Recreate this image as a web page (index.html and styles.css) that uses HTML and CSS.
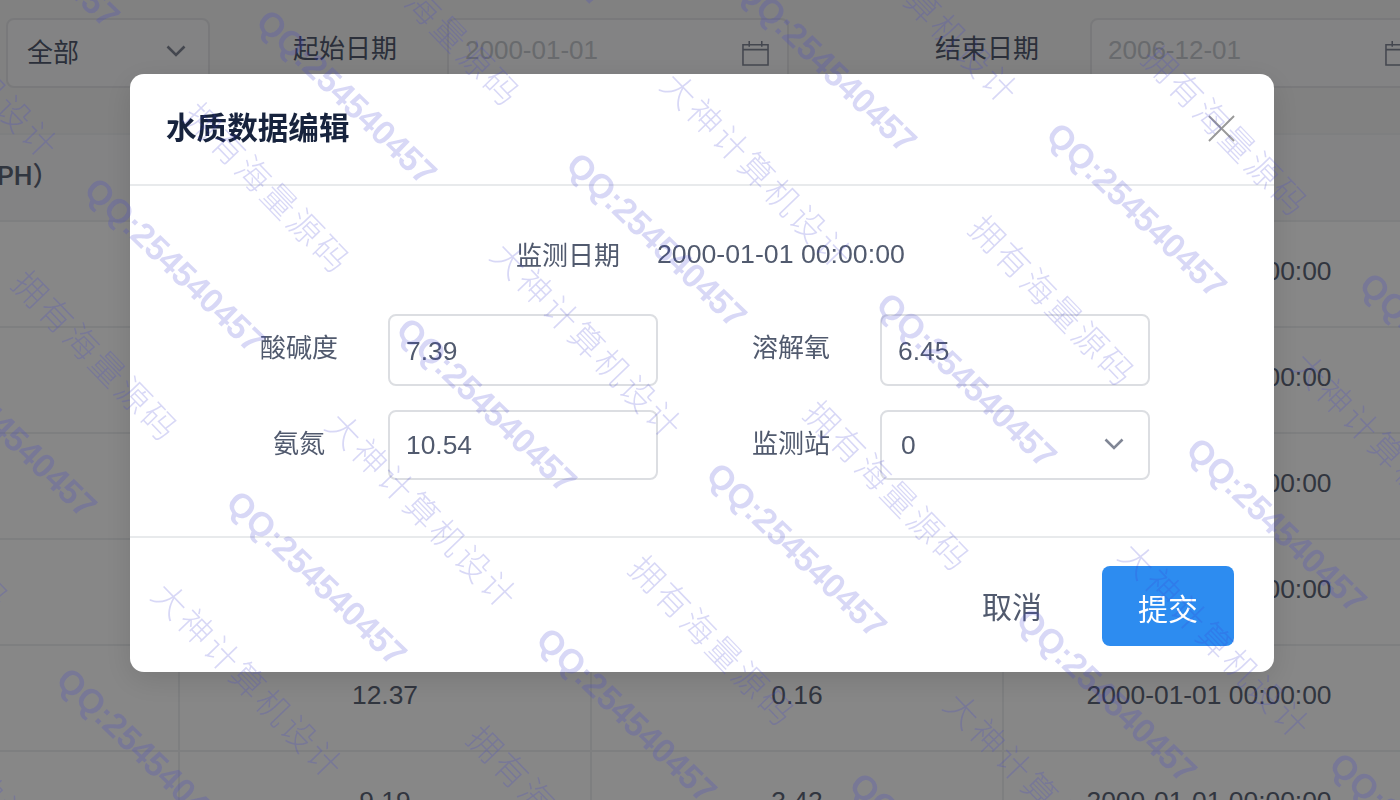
FILE: index.html
```html
<!DOCTYPE html>
<html lang="zh">
<head>
<meta charset="utf-8">
<title>水质数据编辑</title>
<link rel="stylesheet" href="styles.css">
</head>
<body>
<div class="page">
  <div class="filters">
    <div class="box select-box"><span>全部</span>
      <svg class="chev" viewBox="0 0 20 12"><path d="M1.500 1.500 10 10l8.500-8.500"/></svg>
    </div>
    <div class="flabel first">起始日期</div>
    <div class="box date-box"><span>2000-01-01</span>
      <svg class="cal" viewBox="0 0 28 28"><path d="M1 5h26v21H1zM1 10h26M7.500 1v6M20.500 1v6"/></svg>
    </div>
    <div class="flabel second">结束日期</div>
    <div class="box date-box"><span>2006-12-01</span>
      <svg class="cal" viewBox="0 0 28 28"><path d="M1 5h26v21H1zM1 10h26M7.500 1v6M20.500 1v6"/></svg>
    </div>
  </div>
  <div class="table">
    <div class="row head"><div class="cell ph">PH）</div><div class="cell">氨氮</div><div class="cell">溶解氧</div><div class="cell">监测时间</div></div>
    <div class="row"><div class="cell"></div><div class="cell">10.54</div><div class="cell">6.45</div><div class="cell">2000-01-01 00:00:00</div></div>
    <div class="row"><div class="cell"></div><div class="cell">9.33</div><div class="cell">1.28</div><div class="cell">2000-01-01 00:00:00</div></div>
    <div class="row"><div class="cell"></div><div class="cell">7.41</div><div class="cell">0.52</div><div class="cell">2000-01-01 00:00:00</div></div>
    <div class="row"><div class="cell"></div><div class="cell">11.06</div><div class="cell">2.87</div><div class="cell">2000-01-01 00:00:00</div></div>
    <div class="row"><div class="cell"></div><div class="cell">12.37</div><div class="cell">0.16</div><div class="cell">2000-01-01 00:00:00</div></div>
    <div class="row"><div class="cell"></div><div class="cell">9.19</div><div class="cell">3.42</div><div class="cell">2000-01-01 00:00:00</div></div>
  </div>
</div>

<div class="mask"></div>

<div class="modal-wrap">
  <div class="modal">
    <div class="modal-head">
      <div class="modal-title">水质数据编辑</div>
      <svg class="close" viewBox="0 0 28 28"><path d="M1 1l26 26M27 1 1 27"/></svg>
    </div>
    <div class="modal-body">
      <div class="date-line"><span class="date-label">监测日期</span><span class="date-val">2000-01-01 00:00:00</span></div>
      <div class="form">
        <div class="field"><label class="lab">酸碱度</label><div class="inp tall">7.39</div></div>
        <div class="field"><label class="lab">溶解氧</label><div class="inp tall">6.45</div></div>
        <div class="field"><label class="lab narrow">氨氮</label><div class="inp">10.54</div></div>
        <div class="field"><label class="lab">监测站</label><div class="inp sel"><span>0</span>
          <svg class="chev small" viewBox="0 0 20 12"><path d="M1.500 1.500 10 10l8.500-8.500"/></svg></div></div>
      </div>
    </div>
    <div class="modal-foot">
      <span class="cancel">取消</span>
      <span class="submit">提交</span>
    </div>
  </div>
</div>

<svg class="wm" width="1400" height="800" viewBox="0 0 1400 800">
  <g class="qq">
    <text transform="translate(347 97) rotate(44)">QQ:254540457</text>
    <text transform="translate(657 240) rotate(44)">QQ:254540457</text>
    <text transform="translate(175 265) rotate(44)">QQ:254540457</text>
    <text transform="translate(487 405) rotate(44)">QQ:254540457</text>
    <text transform="translate(967 380) rotate(44)">QQ:254540457</text>
    <text transform="translate(1137 210) rotate(44)">QQ:254540457</text>
    <text transform="translate(827 65) rotate(44)">QQ:254540457</text>
    <text transform="translate(317 578) rotate(44)">QQ:254540457</text>
    <text transform="translate(797 550) rotate(44)">QQ:254540457</text>
    <text transform="translate(1277 525) rotate(44)">QQ:254540457</text>
    <text transform="translate(627 715) rotate(44)">QQ:254540457</text>
    <text transform="translate(147 755) rotate(44)">QQ:254540457</text>
    <text transform="translate(1107 695) rotate(44)">QQ:254540457</text>
    <text transform="translate(7 430) rotate(44)">QQ:254540457</text>
    <text transform="translate(30 -60) rotate(44)">QQ:254540457</text>
    <text transform="translate(520 -80) rotate(44)">QQ:254540457</text>
    <text transform="translate(1450 360) rotate(44)">QQ:254540457</text>
    <text transform="translate(940 860) rotate(44)">QQ:254540457</text>
    <text transform="translate(1420 840) rotate(44)">QQ:254540457</text>
  </g>
  <g class="cn">
    <text transform="translate(269 187) rotate(46)">拥有海量源码</text>
    <text transform="translate(97 355) rotate(46)">拥有海量源码</text>
    <text transform="translate(439 20) rotate(46)">拥有海量源码</text>
    <text transform="translate(1227 130) rotate(46)">拥有海量源码</text>
    <text transform="translate(1054 300) rotate(46)">拥有海量源码</text>
    <text transform="translate(889 485) rotate(46)">拥有海量源码</text>
    <text transform="translate(714 640) rotate(46)">拥有海量源码</text>
    <text transform="translate(552 810) rotate(46)">拥有海量源码</text>
    <text transform="translate(-72 525) rotate(46)">拥有海量源码</text>
    <text transform="translate(759 170) rotate(46)">大神计算机设计</text>
    <text transform="translate(589 340) rotate(46)">大神计算机设计</text>
    <text transform="translate(424 510) rotate(46)">大神计算机设计</text>
    <text transform="translate(250 680) rotate(46)">大神计算机设计</text>
    <text transform="translate(1217 640) rotate(46)">大神计算机设计</text>
    <text transform="translate(1042 790) rotate(46)">大神计算机设计</text>
    <text transform="translate(1389 450) rotate(46)">大神计算机设计</text>
    <text transform="translate(925 5) rotate(46)">大神计算机设计</text>
    <text transform="translate(-35 60) rotate(46)">大神计算机设计</text>
    <text transform="translate(40 840) rotate(46)">大神计算机设计</text>
  </g>
</svg>
</body>
</html>
```
FILE: styles.css
```css
* { box-sizing: border-box; }
html, body { margin: 0; height: 100%; }
body {
  width: 1400px;
  height: 800px;
  overflow: hidden;
  position: relative;
  background: #fff;
  font-family: "Liberation Sans", "Noto Sans CJK SC", sans-serif;
  color: #515a6e;
}
.page { width: 1400px; overflow: hidden; height: 800px; }
.filters {
  display: flex;
  align-items: flex-start;
  height: 134px;
  padding: 18px 0 0 6px;
  background: #f3f3f4;
  white-space: nowrap;
}
.box {
  display: flex;
  align-items: center;
  justify-content: space-between;
  height: 70px;
  border: 2px solid #e4e5e8;
  border-radius: 8px;
  background: #f8f8f9;
  font-size: 26px;
  flex: none;
  padding-bottom: 5px;
}
.select-box { width: 204px; padding-left: 19px; padding-right: 22px; padding-bottom: 6px; }
.date-box { width: 342px; padding-left: 16px; padding-right: 18px; color: #c5c8ce; }
.flabel { flex: none; width: 104px; font-size: 26px; line-height: 62px; }
.flabel.first { margin: 0 50px 0 83px; }
.flabel.second { margin: 0 51px 0 146px; }
.chev { width: 20px; height: 12px; fill: none; stroke: #808695; stroke-width: 2.6; margin-top: 2px; }
.chev.small { width: 20px; margin-top: -2px; }
.cal { width: 27px; height: 27px; fill: none; stroke: #808695; stroke-width: 1.6; margin-top: 5px; flex: none; }
.table { width: 1416px; }
.row {
  display: grid;
  grid-template-columns: 180px 412px 412px 412px;
  height: 106px;
  border-bottom: 2px solid #eef0f2;
  font-size: 26px;
}
.row.head { height: 89px; background: #f8f8f9; border-top: 2px solid #eef0f2; margin-top: -1px; }
.cell {
  display: flex;
  align-items: center;
  justify-content: center;
  border-right: 2px solid #eef0f2;
  font-size: 26.4px;
  white-space: nowrap;
  color: #5e6678;
  padding-bottom: 6px;
}
.cell.ph { justify-content: flex-start; margin-left: -3px; padding-bottom: 8px; font-family: Roboto, "Noto Sans CJK SC", sans-serif; font-weight: 500; }
.mask { position: fixed; inset: 0; background: rgba(0,0,0,.47); }
.modal-wrap { position: fixed; inset: 0; padding: 74px 126px 0 130px; }
.modal {
  width: 1144px;
  height: 598px;
  background: #fff;
  border-radius: 14px;
  display: flex;
  flex-direction: column;
  box-shadow: 0 8px 30px rgba(0,0,0,.12);
}
.modal-head {
  height: 112px;
  flex: none;
  display: flex;
  align-items: center;
  justify-content: space-between;
  padding: 0 39px 6px 36px;
  border-bottom: 2px solid #e8eaec;
}
.modal-title { font-size: 30.6px; font-weight: 700; color: #17233d; }
.close { width: 27px; height: 27px; fill: none; stroke: #999; stroke-width: 2; margin-top: 4px; }
.modal-body { flex: none; height: 352px; border-bottom: 2px solid #e8eaec; padding-top: 48px; }
.date-line { display: flex; align-items: center; height: 38px; padding-left: 386px; font-size: 26px; }
.date-label { width: 141px; }
.date-val { font-size: 26.7px; padding-top: 3px; }
.form {
  display: grid;
  grid-template-columns: 492px 270px;
  grid-auto-rows: 96px;
  margin: 42px 0 0 128px;
}
.field { display: flex; align-items: flex-start; }
.lab { width: 130px; font-size: 26px; padding-top: 16px; line-height: 36px; text-indent: 2px; flex: none; }
.lab.narrow { text-indent: 15px; }
.inp {
  width: 270px;
  height: 70px;
  border: 2px solid #dcdee2;
  border-radius: 8px;
  padding: 0 16px;
  font-size: 26.4px;
  display: flex;
  align-items: center;
  flex: none;
}
.inp.tall { height: 72px; padding-top: 2px; }
.inp.sel { justify-content: space-between; padding-right: 24px; padding-left: 19px; }
.modal-foot { flex: 1; display: flex; align-items: flex-start; justify-content: flex-end; padding: 28px 40px 0 0; }
.cancel { font-size: 30px; line-height: 80px; margin-right: 60px; padding-top: 2px; }
.submit {
  width: 132px;
  height: 80px;
  background: #2d8cf0;
  color: #fff;
  font-size: 30px;
  border-radius: 8px;
  display: flex;
  align-items: center;
  justify-content: center;
  padding-top: 2px;
}
.wm { position: fixed; left: 0; top: 0; pointer-events: none; }
.wm text { text-anchor: middle; dominant-baseline: central; }
.qq { font-family: "Liberation Sans", sans-serif; font-weight: 700; font-size: 34px; fill: rgba(60,60,210,.2); }
.cn { font-family: "Noto Sans CJK SC", sans-serif; font-weight: 300; font-size: 34px; letter-spacing: 3px; fill: rgba(60,60,210,.2); }
```
